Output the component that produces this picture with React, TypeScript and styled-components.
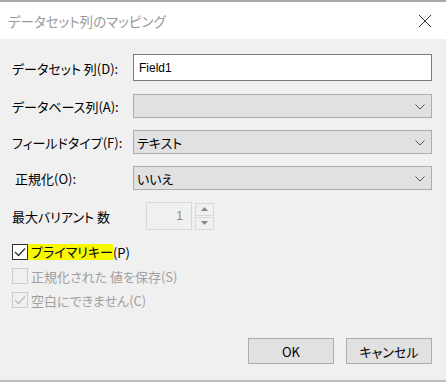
import React from 'react';
import styled, { createGlobalStyle } from 'styled-components';

const GlobalStyle = createGlobalStyle`
  html, body {
    margin: 0;
    padding: 0;
    background: #f0f0f0;
  }
  * {
    box-sizing: border-box;
  }
`;

const FONT = `"Noto Sans CJK JP", "Noto Sans", sans-serif`;

const Dialog = styled.div`
  width: 446px;
  height: 382px;
  display: flex;
  flex-direction: column;
  background: #f0f0f0;
  border-top: 2px solid #a9a9a9;
  border-bottom: 2px solid #bdbdbd;
  font-family: ${FONT};
  font-size: 13px;
  font-feature-settings: "palt";
  color: #000;
`;

const TitleBar = styled.div`
  height: 37px;
  flex: none;
  display: flex;
  align-items: center;
  justify-content: space-between;
  padding: 0 14px 0 8px;
  background: #fff;
`;

const Title = styled.span`
  font-size: 13.5px;
  color: #9a9a9a;
`;

const CloseButton = styled.svg`
  width: 14px;
  height: 14px;
  margin-top: 1px;
`;

const Body = styled.div`
  flex: 1;
  display: flex;
  flex-direction: column;
  padding: 15px 14px 16px 12px;
`;

const Form = styled.div`
  display: grid;
  grid-template-columns: 121px 1fr;
  row-gap: 12px;
  align-items: center;
`;

const Label = styled.label<{ $indent?: number }>`
  padding-left: ${(p) => p.$indent ?? 0}px;
  white-space: nowrap;
`;

const TextInput = styled.div`
  height: 27px;
  display: flex;
  align-items: center;
  padding-left: 5px;
  background: #fff;
  border: 1px solid #7a7a7a;
  font-family: "Liberation Sans", Arial, sans-serif;
  font-size: 12px;
  margin-bottom: 1px;
`;

const Select = styled.div`
  height: 24px;
  display: flex;
  align-items: center;
  justify-content: space-between;
  padding: 0 6px 0 3px;
  background: #e1e1e1;
  border: 1px solid #adadad;
`;

const Chevron = styled.svg`
  width: 10px;
  height: 6px;
  margin-top: 2px;
`;

const SpinWrap = styled.div`
  display: flex;
  align-items: center;
  gap: 3px;
  padding-left: 13px;
`;

const SpinInput = styled.div`
  width: 46px;
  height: 28px;
  display: flex;
  align-items: center;
  justify-content: flex-end;
  padding-right: 8px;
  border: 1px solid #d9d9d9;
  background: #f0f0f0;
  color: #8a8a8a;
  font-family: "Liberation Sans", Arial, sans-serif;
  font-size: 12px;
`;

const SpinButtons = styled.div`
  display: flex;
  flex-direction: column;
  gap: 1px;
`;

const SpinButton = styled.div`
  width: 19px;
  height: 13px;
  display: flex;
  align-items: center;
  justify-content: center;
  border: 1px solid #d9d9d9;
  background: #f0f0f0;
`;

const CheckList = styled.div`
  display: flex;
  flex-direction: column;
  gap: 8px;
  margin-top: 14px;
`;

const CheckRow = styled.div<{ $disabled?: boolean }>`
  display: flex;
  align-items: center;
  height: 16px;
  color: ${(p) => (p.$disabled ? '#a0a0a0' : '#000')};
`;

const Box = styled.div<{ $disabled?: boolean }>`
  width: 16px;
  height: 16px;
  flex: none;
  display: flex;
  align-items: center;
  justify-content: center;
  border: 1px solid ${(p) => (p.$disabled ? '#cccccc' : '#333333')};
  background: ${(p) => (p.$disabled ? '#f0f0f0' : '#ffffff')};
  margin-right: 3px;
`;

const Highlight = styled.span`
  background: #f7f700;
  line-height: 16px;
  margin-left: -3px;
  padding-left: 3px;
`;

const Footer = styled.div`
  margin-top: auto;
  display: flex;
  justify-content: flex-end;
  gap: 12px;
`;

const Button = styled.div`
  width: 86px;
  height: 26px;
  display: flex;
  align-items: center;
  justify-content: center;
  background: #e1e1e1;
  border: 1px solid #adadad;
  font-size: 13px;
`;

const ChevronIcon = () => (
  <Chevron viewBox="0 0 10 6">
    <path d="M0.5 0.5 L5 5 L9.5 0.5" fill="none" stroke="#555" strokeWidth="1" />
  </Chevron>
);

const CheckMark = ({ color }: { color: string }) => (
  <svg width="12" height="10" viewBox="0 0 12 10">
    <path d="M1 5 L4.5 8.5 L11 1.5" fill="none" stroke={color} strokeWidth="1.3" />
  </svg>
);

const App = () => {
  return (
    <>
      <GlobalStyle />
      <Dialog>
        <TitleBar>
          <Title>データセット列のマッピング</Title>
          <CloseButton viewBox="0 0 14 14">
            <path d="M1 1 L13 13 M13 1 L1 13" stroke="#333" strokeWidth="1" />
          </CloseButton>
        </TitleBar>
        <Body>
          <Form>
            <Label>データセット 列(D):</Label>
            <TextInput>Field1</TextInput>

            <Label>データベース列(A):</Label>
            <Select>
              <span />
              <ChevronIcon />
            </Select>

            <Label>フィールドタイプ(F):</Label>
            <Select>
              <span>テキスト</span>
              <ChevronIcon />
            </Select>

            <Label $indent={3}>正規化(O):</Label>
            <Select>
              <span>いいえ</span>
              <ChevronIcon />
            </Select>

            <Label>最大バリアント 数</Label>
            <SpinWrap>
              <SpinInput>1</SpinInput>
              <SpinButtons>
                <SpinButton>
                  <svg width="7" height="4" viewBox="0 0 7 4">
                    <path d="M0 4 L3.5 0 L7 4 Z" fill="#888" />
                  </svg>
                </SpinButton>
                <SpinButton>
                  <svg width="7" height="4" viewBox="0 0 7 4">
                    <path d="M0 0 L3.5 4 L7 0 Z" fill="#888" />
                  </svg>
                </SpinButton>
              </SpinButtons>
            </SpinWrap>
          </Form>

          <CheckList>
            <CheckRow>
              <Box>
                <CheckMark color="#333" />
              </Box>
              <Highlight>プライマリキー</Highlight>
              <span>(P)</span>
            </CheckRow>
            <CheckRow $disabled>
              <Box $disabled />
              <span>正規化された 値を保存(S)</span>
            </CheckRow>
            <CheckRow $disabled>
              <Box $disabled>
                <CheckMark color="#bdbdbd" />
              </Box>
              <span>空白にできません(C)</span>
            </CheckRow>
          </CheckList>

          <Footer>
            <Button>OK</Button>
            <Button>キャンセル</Button>
          </Footer>
        </Body>
      </Dialog>
    </>
  );
};

export default App;
